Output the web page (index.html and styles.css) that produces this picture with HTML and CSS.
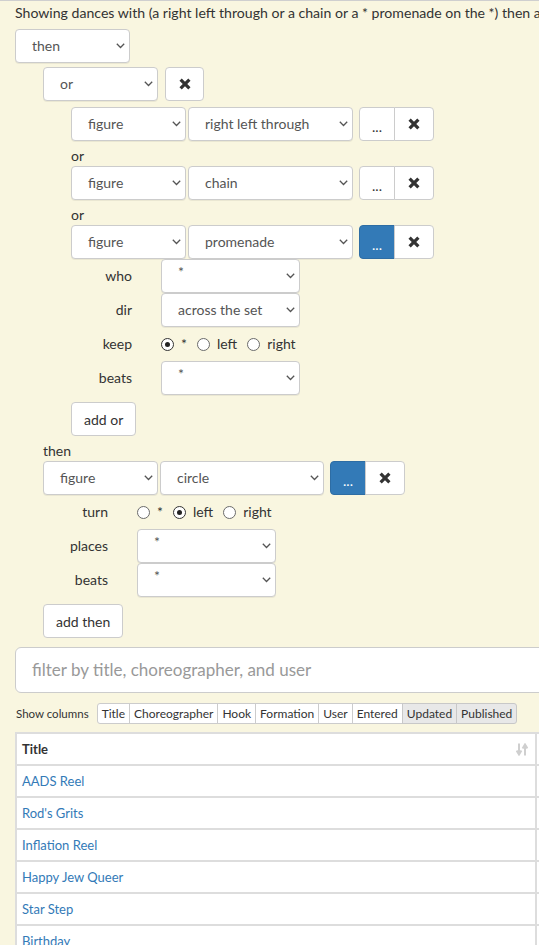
FILE: index.html
```html
<!DOCTYPE html>
<html>
<head>
<meta charset="utf-8">
<link rel="stylesheet" href="styles.css">
</head>
<body>
<div class="page">
  <p class="summary">Showing dances with (a right left through or a chain or a * promenade on the *) then a circle</p>

  <div class="sel w115"><span>then</span><svg class="chev" width="9" height="6" viewBox="0 0 9 6"><path d="M0.8 0.8L4.5 4.5L8.2 0.8"/></svg></div>

  <div class="children c1">
    <div class="row">
      <div class="sel w115"><span>or</span><svg class="chev" width="9" height="6" viewBox="0 0 9 6"><path d="M0.8 0.8L4.5 4.5L8.2 0.8"/></svg></div>
      <button class="btn xbtn solo"><svg width="12" height="12" viewBox="0 0 12 12"><path d="M1.6 1.6L10.4 10.4M10.4 1.6L1.6 10.4"/></svg></button>
    </div>

    <div class="children c2">
      <div class="row">
        <div class="sel w115"><span>figure</span><svg class="chev" width="9" height="6" viewBox="0 0 9 6"><path d="M0.8 0.8L4.5 4.5L8.2 0.8"/></svg></div>
        <div class="sel w165 gap2"><span>right left through</span><svg class="chev" width="9" height="6" viewBox="0 0 9 6"><path d="M0.8 0.8L4.5 4.5L8.2 0.8"/></svg></div>
        <button class="btn dots">...</button>
        <button class="btn xbtn"><svg width="12" height="12" viewBox="0 0 12 12"><path d="M1.6 1.6L10.4 10.4M10.4 1.6L1.6 10.4"/></svg></button>
      </div>
      <div class="conj">or</div>
      <div class="row">
        <div class="sel w115"><span>figure</span><svg class="chev" width="9" height="6" viewBox="0 0 9 6"><path d="M0.8 0.8L4.5 4.5L8.2 0.8"/></svg></div>
        <div class="sel w165 gap2"><span>chain</span><svg class="chev" width="9" height="6" viewBox="0 0 9 6"><path d="M0.8 0.8L4.5 4.5L8.2 0.8"/></svg></div>
        <button class="btn dots">...</button>
        <button class="btn xbtn"><svg width="12" height="12" viewBox="0 0 12 12"><path d="M1.6 1.6L10.4 10.4M10.4 1.6L1.6 10.4"/></svg></button>
      </div>
      <div class="conj">or</div>
      <div class="row">
        <div class="sel w115"><span>figure</span><svg class="chev" width="9" height="6" viewBox="0 0 9 6"><path d="M0.8 0.8L4.5 4.5L8.2 0.8"/></svg></div>
        <div class="sel w165 gap2"><span>promenade</span><svg class="chev" width="9" height="6" viewBox="0 0 9 6"><path d="M0.8 0.8L4.5 4.5L8.2 0.8"/></svg></div>
        <button class="btn dots active">...</button>
        <button class="btn xbtn"><svg width="12" height="12" viewBox="0 0 12 12"><path d="M1.6 1.6L10.4 10.4M10.4 1.6L1.6 10.4"/></svg></button>
      </div>
      <div class="params p1">
        <div class="plabel">who</div>
        <div class="sel w139"><span class="ast">*</span><svg class="chev" width="9" height="6" viewBox="0 0 9 6"><path d="M0.8 0.8L4.5 4.5L8.2 0.8"/></svg></div>
        <div class="plabel">dir</div>
        <div class="sel w139"><span>across the set</span><svg class="chev" width="9" height="6" viewBox="0 0 9 6"><path d="M0.8 0.8L4.5 4.5L8.2 0.8"/></svg></div>
        <div class="plabel">keep</div>
        <div class="radios">
          <span class="ropt"><span class="radio on"></span><span>*</span></span>
          <span class="ropt"><span class="radio"></span><span>left</span></span>
          <span class="ropt"><span class="radio"></span><span>right</span></span>
        </div>
        <div class="plabel">beats</div>
        <div class="sel w139"><span class="ast">*</span><svg class="chev" width="9" height="6" viewBox="0 0 9 6"><path d="M0.8 0.8L4.5 4.5L8.2 0.8"/></svg></div>
      </div>
      <button class="btn addbtn">add or</button>
    </div>

    <div class="conj">then</div>
    <div class="row">
      <div class="sel w115"><span>figure</span><svg class="chev" width="9" height="6" viewBox="0 0 9 6"><path d="M0.8 0.8L4.5 4.5L8.2 0.8"/></svg></div>
      <div class="sel w164 gap2"><span>circle</span><svg class="chev" width="9" height="6" viewBox="0 0 9 6"><path d="M0.8 0.8L4.5 4.5L8.2 0.8"/></svg></div>
      <button class="btn dots active">...</button>
      <button class="btn xbtn"><svg width="12" height="12" viewBox="0 0 12 12"><path d="M1.6 1.6L10.4 10.4M10.4 1.6L1.6 10.4"/></svg></button>
    </div>
    <div class="params p2">
      <div class="plabel">turn</div>
      <div class="radios">
        <span class="ropt"><span class="radio"></span><span>*</span></span>
        <span class="ropt"><span class="radio on"></span><span>left</span></span>
        <span class="ropt"><span class="radio"></span><span>right</span></span>
      </div>
      <div class="plabel">places</div>
      <div class="sel w139"><span class="ast">*</span><svg class="chev" width="9" height="6" viewBox="0 0 9 6"><path d="M0.8 0.8L4.5 4.5L8.2 0.8"/></svg></div>
      <div class="plabel">beats</div>
      <div class="sel w139"><span class="ast">*</span><svg class="chev" width="9" height="6" viewBox="0 0 9 6"><path d="M0.8 0.8L4.5 4.5L8.2 0.8"/></svg></div>
    </div>
    <button class="btn addbtn">add then</button>
  </div>

  <div class="filter">filter by title, choreographer, and user</div>

  <div class="showcols">
    <span class="sc-label">Show columns</span>
    <div class="sc-group">
      <span class="sc-btn">Title</span>
      <span class="sc-btn">Choreographer</span>
      <span class="sc-btn">Hook</span>
      <span class="sc-btn">Formation</span>
      <span class="sc-btn">User</span>
      <span class="sc-btn">Entered</span>
      <span class="sc-btn off">Updated</span>
      <span class="sc-btn off">Published</span>
    </div>
  </div>

  <table class="dances">
    <thead>
      <tr>
        <th class="col-title"><div class="th-inner"><span>Title</span><svg class="sort" width="12" height="13" viewBox="0 0 12 13"><path d="M3 0.5V10M0.6 7.6L3 11.5L5.4 7.6M9 12.5V3M6.6 5.4L9 1.5L11.4 5.4"/></svg></div></th>
        <th></th>
      </tr>
    </thead>
    <tbody>
      <tr><td><a>AADS Reel</a></td><td></td></tr>
      <tr><td><a>Rod's Grits</a></td><td></td></tr>
      <tr><td><a>Inflation Reel</a></td><td></td></tr>
      <tr><td><a>Happy Jew Queer</a></td><td></td></tr>
      <tr><td><a>Star Step</a></td><td></td></tr>
      <tr><td><a>Birthday</a></td><td></td></tr>
      <tr><td><a>Chorus Jig</a></td><td></td></tr>
    </tbody>
  </table>
</div>
</body>
</html>
```

FILE: styles.css
```css
html, body {
  margin: 0;
  padding: 0;
}
body {
  background: #f9f6e0;
  border-top: 1px solid #cfcfcf;
  font-family: Lato, "Liberation Sans", sans-serif;
  font-size: 14px;
  line-height: 20px;
  color: #333;
  overflow: hidden;
  height: 944px;
}
.page {
  padding: 0 15px;
}
.summary {
  margin: 2px 0 6px;
  white-space: nowrap;
  font-size: 14.1px;
}
.children.c1 {
  margin-left: 28px;
  padding-top: 4px;
}
.children.c2 {
  margin-left: 28px;
  padding-top: 6px;
}
.row {
  display: flex;
  align-items: center;
}
.sel {
  box-sizing: border-box;
  height: 34px;
  display: flex;
  align-items: center;
  justify-content: space-between;
  background: #fff;
  border: 1px solid #ccc;
  border-radius: 4px;
  box-shadow: 0 1px 0 rgba(0,0,0,0.06);
  padding: 0 4px 0 16px;
  color: #555;
  white-space: nowrap;
}
.w115 { width: 115px; }
.w165 { width: 165px; }
.w164 { width: 164px; }
.w139 { width: 139px; }
.gap2 { margin-left: 2px; }
.chev {
  fill: none;
  stroke: #555;
  stroke-width: 1.3;
  flex: none;
}
.ast {
  align-self: flex-start;
  margin-top: 5px;
  line-height: 14px;
}
.btn {
  box-sizing: border-box;
  height: 34px;
  background: #fff;
  border: 1px solid #ccc;
  border-radius: 4px;
  color: #333;
  font-family: inherit;
  font-size: 14px;
  padding: 0;
  display: inline-flex;
  align-items: center;
  justify-content: center;
}
.dots {
  width: 36px;
  margin-left: 6px;
  border-top-right-radius: 0;
  border-bottom-right-radius: 0;
  padding-top: 4px;
}
.dots.active {
  background: #337ab7;
  border-color: #2e6da4;
  color: #fff;
}
.xbtn {
  width: 40px;
  margin-left: -1px;
  border-top-left-radius: 0;
  border-bottom-left-radius: 0;
}
.xbtn.solo {
  width: 39px;
  margin-left: 7px;
  border-radius: 4px;
}
.xbtn svg {
  fill: none;
  stroke: #333;
  stroke-width: 3.2;
}
.conj {
  margin-top: 5px;
  line-height: 20px;
}
.params {
  display: grid;
  grid-auto-rows: 34px;
  align-items: center;
  column-gap: 29px;
}
.params.p1 {
  grid-template-columns: 61px 139px;
}
.params.p2 {
  grid-template-columns: 65px 139px;
}
.plabel {
  text-align: right;
}
.radios {
  display: flex;
  align-items: center;
  white-space: nowrap;
}
.ropt {
  display: inline-flex;
  align-items: center;
  gap: 7px;
  margin-right: 10px;
}
.radio {
  box-sizing: border-box;
  width: 13px;
  height: 13px;
  border: 1px solid #6b6b6b;
  border-radius: 50%;
  background: #fff;
  display: inline-flex;
  align-items: center;
  justify-content: center;
}
.radio.on {
  border-color: #333;
}
.radio.on::after {
  content: "";
  width: 5px;
  height: 5px;
  border-radius: 50%;
  background: #222;
}
.addbtn {
  margin-top: 7px;
  padding: 0 12px;
}
.filter {
  box-sizing: border-box;
  margin-top: 9px;
  width: 720px;
  height: 46px;
  background: #fff;
  border: 1px solid #ccc;
  border-radius: 6px;
  padding: 0 16px;
  display: flex;
  align-items: center;
  font-size: 17px;
  color: #999;
}
.showcols {
  margin-top: 10px;
  height: 21px;
  display: flex;
  align-items: center;
}
.sc-label {
  font-size: 11.5px;
  margin-left: 1px;
  margin-right: 8px;
}
.sc-group {
  display: flex;
}
.sc-btn {
  box-sizing: border-box;
  height: 21px;
  display: inline-flex;
  align-items: center;
  padding: 0 4px;
  font-size: 12px;
  background: #fff;
  border: 1px solid #ccc;
  margin-left: -1px;
}
.sc-btn:first-child {
  margin-left: 0;
  border-radius: 3px 0 0 3px;
}
.sc-btn:last-child {
  border-radius: 0 3px 3px 0;
}
.sc-btn.off {
  background: #e8e8e8;
  border-color: #c8c8c8;
}
.dances {
  margin-top: 8px;
  border-collapse: separate;
  border-spacing: 0;
  border-top: 2px solid #ddd;
  border-left: 2px solid #ddd;
  background: #fff;
  width: 900px;
  table-layout: fixed;
  font-size: 13px;
}
.dances th, .dances td {
  padding: 5px 5px;
  line-height: 20px;
  border-right: 2px solid #ddd;
  border-bottom: 2px solid #ddd;
  text-align: left;
  white-space: nowrap;
  overflow: hidden;
}
.dances th {
  font-weight: bold;
  color: #333;
}
.dances th.col-title {
  width: 508px;
}
.th-inner {
  display: flex;
  align-items: center;
  justify-content: space-between;
}
.sort {
  fill: none;
  stroke: #cfcfcf;
  stroke-width: 2;
  margin-right: 2px;
}
.dances td a {
  color: #337ab7;
}
```
